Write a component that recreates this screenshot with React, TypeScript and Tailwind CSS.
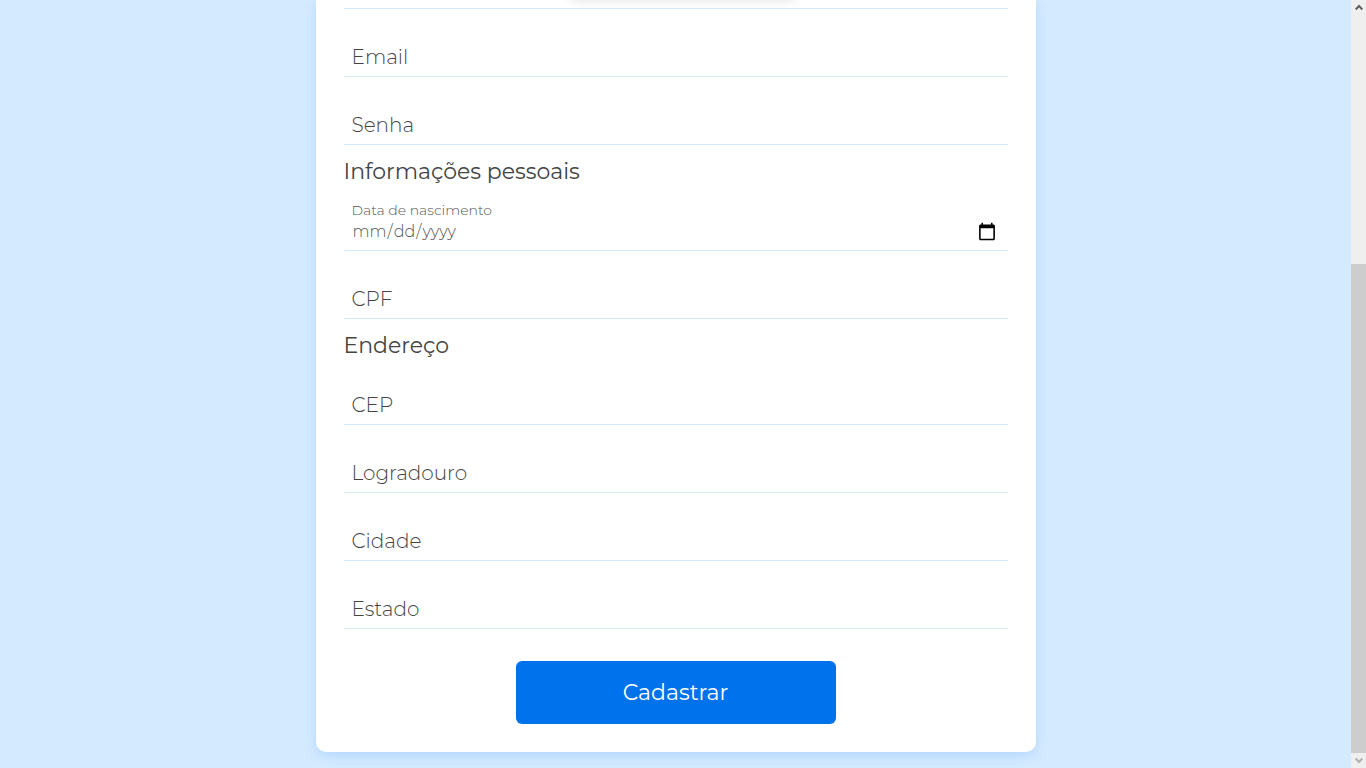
import { ReactNode } from "react";

type FieldProps = { id: string; label: string; type?: string };

function Field({ id, label, type = "text" }: FieldProps) {
  return (
    <div className="relative flex h-[68px] flex-col justify-end border-b border-[#d4eaff]">
      <label htmlFor={id} className="pointer-events-none absolute bottom-[5px] left-2 text-xl leading-7">
        {label}
      </label>
      <input id={id} type={type} className="h-9 w-full bg-transparent px-2 text-base outline-none" />
    </div>
  );
}

function DateField({ id, label }: FieldProps) {
  return (
    <div className="flex h-[68px] flex-col justify-end border-b border-[#d4eaff] pb-1">
      <label htmlFor={id} className="px-2 text-sm leading-4 text-[#555]">
        {label}
      </label>
      <input
        id={id}
        type="date"
        className="h-7 w-full bg-transparent pr-[9px] pl-2 text-base text-[#555] outline-none [&::-webkit-calendar-picker-indicator]:size-5"
      />
    </div>
  );
}

function Section({ title, children }: { title: string; children: ReactNode }) {
  return (
    <section>
      <h2 className="pt-4 text-[22px] leading-[22px] font-normal">{title}</h2>
      {children}
    </section>
  );
}

function ScrollBar() {
  return (
    <div aria-hidden="true" className="flex w-[15px] shrink-0 flex-col items-center bg-[#efefef]">
      <div className="flex h-[15px] items-center">
        <svg width="8" height="7" viewBox="0 0 8 7" fill="none" stroke="#606060" strokeWidth="2">
          <path d="M0.7 5.5 4 2 7.3 5.5" />
        </svg>
      </div>
      <div className="grow" />
      <div className="h-[489px] w-full bg-[#cdcdcd]" />
      <div className="flex h-[15px] items-center">
        <svg width="8" height="7" viewBox="0 0 8 7" fill="none" stroke="#b0b0b0" strokeWidth="2">
          <path d="M0.7 1.5 4 5 7.3 1.5" />
        </svg>
      </div>
    </div>
  );
}

export default function App() {
  return (
    <div className="relative flex h-screen overflow-hidden bg-[#d4eaff] font-['Montserrat','Inter',sans-serif] font-light text-[#444]">
      <main className="grow overflow-hidden pb-4">
        <form
          className="mx-auto max-w-[720px] rounded-b-[10px] bg-white px-7 pb-7 shadow-[0_4px_12px_#b4d7ff]"
          onSubmit={(event) => event.preventDefault()}
        >
          <div className="h-[9px] border-b border-[#d4eaff]" />
          <Field id="email" label="Email" type="email" />
          <Field id="senha" label="Senha" type="password" />
          <Section title="Informações pessoais">
            <DateField id="nascimento" label="Data de nascimento" />
            <Field id="cpf" label="CPF" />
          </Section>
          <Section title="Endereço">
            <Field id="cep" label="CEP" />
            <Field id="logradouro" label="Logradouro" />
            <Field id="cidade" label="Cidade" />
            <Field id="estado" label="Estado" />
          </Section>
          <button
            type="submit"
            className="mx-auto mt-8 block h-[63px] w-80 max-w-full rounded-md bg-[#0072ec] text-[22px] font-normal text-white"
          >
            Cadastrar
          </button>
        </form>
      </main>
      <ScrollBar />
      <div
        aria-hidden="true"
        className="absolute bottom-full left-1/2 h-10 w-56 -translate-x-1/2 shadow-[0_0_10px_rgba(0,0,0,0.12)]"
      />
    </div>
  );
}
